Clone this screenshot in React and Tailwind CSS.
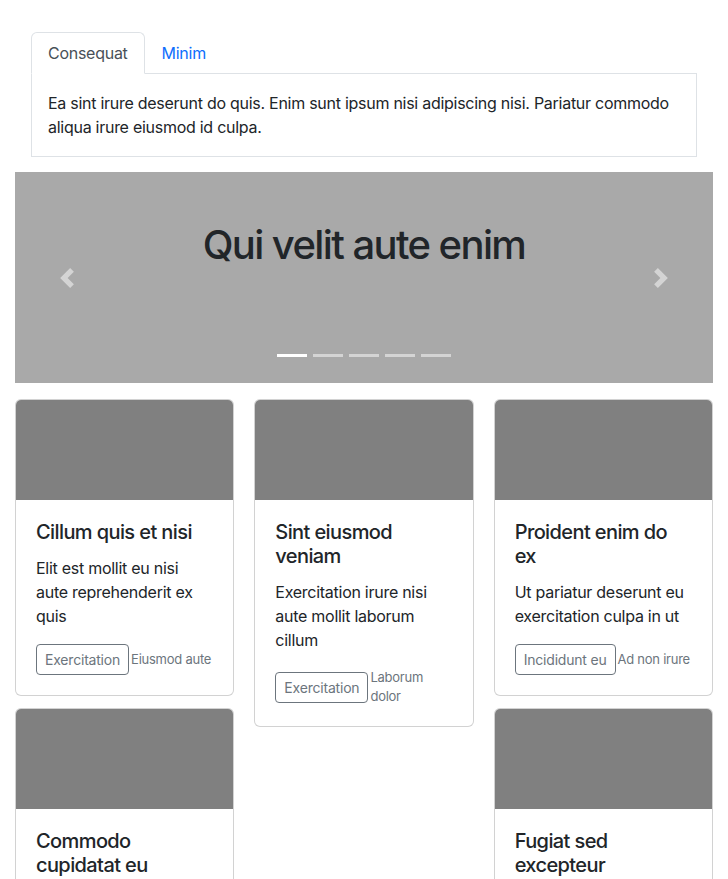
import { useState } from 'react'

const cards = [
  [
    {
      title: 'Cillum quis et nisi',
      text: 'Elit est mollit eu nisi aute reprehenderit ex quis',
      button: 'Exercitation',
      note: 'Eiusmod aute',
    },
    {
      title: 'Commodo cupidatat eu',
      text: 'Velit sunt nulla aliqua officia esse',
      button: 'Nostrud',
      note: 'Dolor elit',
    },
  ],
  [
    {
      title: 'Sint eiusmod veniam',
      text: 'Exercitation irure nisi aute mollit laborum cillum',
      button: 'Exercitation',
      note: 'Laborum dolor',
    },
  ],
  [
    {
      title: 'Proident enim do ex',
      text: 'Ut pariatur deserunt eu exercitation culpa in ut',
      button: 'Incididunt eu',
      note: 'Ad non irure',
    },
    {
      title: 'Fugiat sed excepteur',
      text: 'Amet irure labore aliqua veniam',
      button: 'Cupidatat',
      note: 'Magna sit',
    },
  ],
]

// bootstrap 4 style carousel chevrons
function Chevron({ dir }) {
  const d = dir === 'left' ? 'M5.25 0l-4 4 4 4 1.5-1.5L4.25 4l2.5-2.5L5.25 0z' : 'M2.75 0l-1.5 1.5L3.75 4l-2.5 2.5L2.75 8l4-4-4-4z'
  return (
    <svg viewBox="0 0 8 8" className="w-5 h-5 opacity-50" fill="#fff">
      <path d={d} />
    </svg>
  )
}

function Card({ card }) {
  return (
    <div className="border border-black/[0.175] rounded-md overflow-hidden bg-white">
      <div className="h-[100px] bg-[#808080]" />
      <div className="p-5">
        <h5 className="text-[20px] leading-6 font-medium tracking-[-0.6px] text-[#212529] mb-3">{card.title}</h5>
        <p className="text-base leading-6 tracking-[-0.27px] text-[#212529] mb-4">{card.text}</p>
        <div className="flex items-center gap-[2px]">
          <button className="shrink-0 border border-[#6c757d] text-[#6c757d] rounded px-2 py-1 text-sm leading-[21px] tracking-[-0.2px]">
            {card.button}
          </button>
          <span className="text-[13px] leading-[19px] tracking-[-0.25px] text-[#6c757d]">{card.note}</span>
        </div>
      </div>
    </div>
  )
}

export default function App() {
  const [tab, setTab] = useState(0)
  const tabs = ['Consequat', 'Minim']

  return (
    <div className="bg-white min-h-screen px-[15px] pt-8 font-['Inter',sans-serif] text-[#212529]">
      <div className="px-4">
        <div className="flex border-b border-[#dee2e6]">
          {tabs.map((t, i) => (
            <button
              key={t}
              onClick={() => setTab(i)}
              className={
                i === tab
                  ? 'px-4 py-2 leading-6 text-base tracking-[-0.27px] text-[#495057] bg-white border border-[#dee2e6] border-b-white rounded-t-md -mb-px'
                  : 'px-4 py-2 leading-6 text-base tracking-[-0.27px] text-[#0d6efd] border border-transparent -mb-px'
              }
            >
              {t}
            </button>
          ))}
        </div>
        <div className="border border-t-0 border-[#dee2e6] px-4 pt-[17px] pb-[17px] text-base leading-6 tracking-[-0.27px]">
          Ea sint irure deserunt do quis. Enim sunt ipsum nisi adipiscing nisi. Pariatur commodo aliqua irure eiusmod id culpa.
        </div>
      </div>

      <div className="relative mt-[15px] h-[211px] bg-[#a9a9a9] flex justify-center">
        <h1 className="pt-[49px] text-[40px] leading-[48px] font-medium text-[#212529] tracking-[-1.6px]">Qui velit aute enim</h1>
        <div className="absolute left-0 top-0 bottom-0 w-[15%] flex items-center justify-center">
          <Chevron dir="left" />
        </div>
        <div className="absolute right-0 top-0 bottom-0 w-[15%] flex items-center justify-center">
          <Chevron dir="right" />
        </div>
        <div className="absolute bottom-[26px] left-0 right-0 flex justify-center gap-[6px]">
          {[0, 1, 2, 3, 4].map((i) => (
            <span key={i} className={i === 0 ? 'w-[30px] h-[3px] bg-white' : 'w-[30px] h-[3px] bg-white/50'} />
          ))}
        </div>
      </div>

      <div className="grid grid-cols-3 gap-x-5 mt-4">
        {cards.map((col, ci) => (
          <div key={ci} className="flex flex-col gap-3">
            {col.map((c) => (
              <Card key={c.title} card={c} />
            ))}
          </div>
        ))}
      </div>
    </div>
  )
}
